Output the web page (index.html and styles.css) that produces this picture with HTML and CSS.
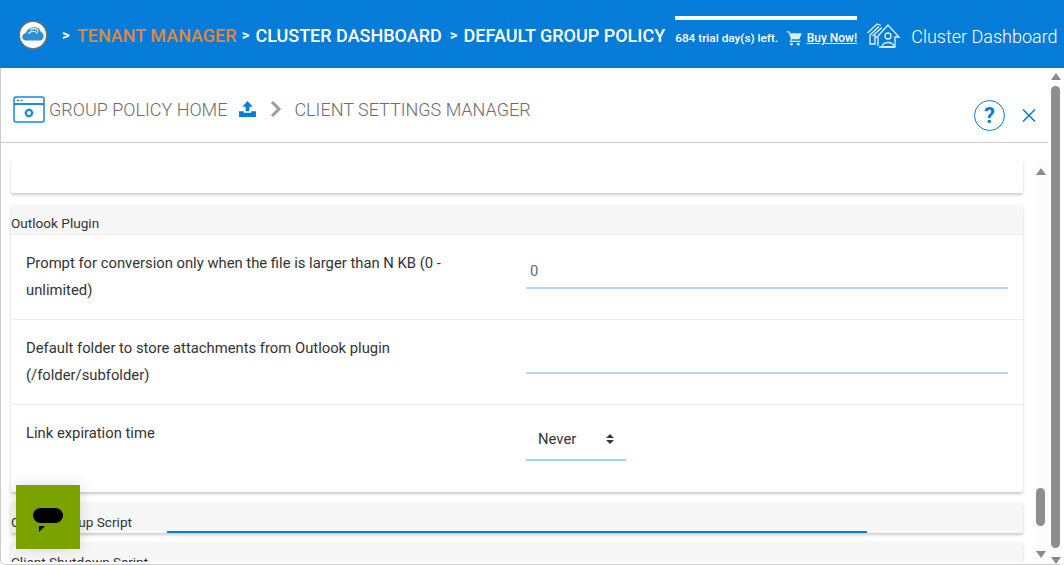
FILE: index.html
```html
<!DOCTYPE html>
<html lang="en">
<head>
    <meta charset="UTF-8">
    <title>Client Settings Manager</title>
    <link rel="stylesheet" href="styles.css">
</head>
<body>
    <header class="topbar">
        <span class="logo">
            <svg width="30" height="30" viewBox="0 0 30 30">
                <circle cx="15" cy="15" r="13.600" fill="#fff" stroke="#7d7468" stroke-width="1.300"/>
                <path d="M8 20.500c-5 0-5-7 0-7.500C9 7.500 20 4 23 12c4 1 3.500 8.500-1 8.500z" fill="#2b8fd6"/>
                <path d="M10.500 13.500c3-3 7-3 9 0M12.500 10c2.500-2 6-2 8 1.500" fill="none" stroke="#fff" stroke-width="1.200"/>
            </svg>
        </span>
        <nav class="crumbs">
            <span class="sep first">&gt;</span>
            <a class="tenant">TENANT MANAGER</a>
            <span class="sep">&gt;</span>
            <a class="cluster">CLUSTER DASHBOARD</a>
            <span class="sep gap">&gt;</span>
            <a class="policy">DEFAULT GROUP POLICY</a>
        </nav>
        <div class="trial">
            <span class="trial-text">684 trial day(s) left.</span>
            <svg class="cart" width="17" height="16" viewBox="0 0 24 22">
                <path d="M1 1h4l1 3h17l-3.500 9H8.500L7.500 15H21v2H5l2-4.500L4 3H1z" fill="#d9ecfb"/>
                <circle cx="8" cy="20" r="2" fill="#d9ecfb"/>
                <circle cx="18" cy="20" r="2" fill="#d9ecfb"/>
            </svg>
            <a class="buy">Buy Now!</a>
        </div>
        <svg class="house" width="33" height="25" viewBox="0 0 33 25" fill="none" stroke="#e3f1fc" stroke-width="1.300">
            <path d="M0.500 10 10 1l4 1.500M3 12 12 3.500M5.500 13 15 4.500"/>
            <path d="M11 13 21 2l11 12h-4v10H12"/>
            <path d="M3 12v9h5V12M8 14h3v9"/>
            <circle cx="21" cy="13" r="3"/>
            <path d="M15 24c0-6 12-6 12 0z"/>
        </svg>
        <span class="page-name">Cluster Dashboard</span>
    </header>

    <main class="modal">
        <div class="modal-body">
            <div class="modal-head">
                <svg class="win-icon" width="32" height="27" viewBox="0 0 32 27" fill="none" stroke="#1587df" stroke-width="1.500">
                    <path d="M1 8V3a2 2 0 0 1 2-2h26a2 2 0 0 1 2 2v5z"/>
                    <rect x="1" y="8" width="30" height="18" rx="2"/>
                    <path d="M4 4.500h2M7.500 4.500h2" stroke-width="1.500"/>
                    <circle cx="16" cy="17" r="3" stroke-width="2"/>
                    <path d="M16 12.500V14M16 20v1.500M11.500 17H13M19 17h1.500M13 14l1 1M18 19l1 1M19 14l-1 1M14 19l-1 1" stroke-width="1.400"/>
                </svg>
                <span class="head-link">GROUP POLICY HOME</span>
                <svg class="upload" width="17" height="16" viewBox="0 0 18 17">
                    <path d="M9 0 14.500 6H11v5H7V6H3.500z" fill="#067cd9"/>
                    <path d="M0 11h5v1.500h8V11h5v6H0z" fill="#067cd9"/>
                </svg>
                <svg class="chevron" width="12" height="16" viewBox="0 0 12 16">
                    <path d="M2 1l7 7-7 7" fill="none" stroke="#a39c96" stroke-width="3"/>
                </svg>
                <span class="head-link">CLIENT SETTINGS MANAGER</span>
                <span class="head-tools">
                    <span class="help">?</span>
                    <svg width="14" height="13" viewBox="0 0 14 13">
                        <path d="M1 .5l12 12M13 .5l-12 12" stroke="#067cd9" stroke-width="1.500"/>
                    </svg>
                </span>
            </div>
            <div class="settings">
                <div class="settings-scroll">
                    <section class="card blank"></section>

                    <section class="card">
                        <h3 class="card-title">Outlook Plugin</h3>
                        <div class="row">
                            <label class="row-label">Prompt for conversion only when the file is larger than N KB (0 - unlimited)</label>
                            <div class="field field-value">0</div>
                        </div>
                        <div class="row">
                            <label class="row-label">Default folder to store attachments from Outlook plugin (/folder/subfolder)</label>
                            <div class="field"></div>
                        </div>
                        <div class="row last">
                            <label class="row-label">Link expiration time</label>
                            <div class="select">Never
                                <svg width="8" height="10" viewBox="0 0 8 10">
                                    <path d="M4 0 8 4H0zM4 10 0 6h8z" fill="#343a40"/>
                                </svg>
                            </div>
                        </div>
                    </section>

                    <section class="card collapsed">
                        <h3 class="card-title">Client Startup Script</h3>
                    </section>
                    <section class="card collapsed">
                        <h3 class="card-title">Client Shutdown Script</h3>
                    </section>
                </div>
                <div class="scrollbar inner">
                    <i class="up"></i>
                    <b class="thumb"></b>
                    <i class="down"></i>
                </div>
            </div>
        </div>
        <div class="scrollbar outer">
            <i class="up"></i>
            <b class="thumb"></b>
            <i class="down"></i>
        </div>
    </main>

    <div class="progress-line"></div>
    <button class="chat">
        <svg width="32" height="24" viewBox="0 0 32 24">
            <rect x="1" y="0" width="30" height="15" rx="7.500" fill="#000"/>
            <path d="M7 18h6l-6 6z" fill="#000"/>
        </svg>
    </button>
</body>
</html>
```

FILE: styles.css
```css
html, body {
    margin: 0;
    height: 100%;
    overflow: hidden;
}
body {
    display: flex;
    flex-direction: column;
    font-family: Roboto, "Liberation Sans", sans-serif;
    background: #fff;
}
a {
    color: inherit;
}

/* top bar */
.topbar {
    flex: 0 0 68px;
    display: flex;
    align-items: center;
    box-sizing: border-box;
    padding-top: 2px;
    background: #067cd9;
    color: #fff;
    white-space: nowrap;
}
.logo {
    display: flex;
    margin-left: 18px;
}
.crumbs {
    display: flex;
    align-items: center;
    margin-left: 14px;
    font-size: 18px;
    font-weight: 500;
}
.sep {
    font-weight: 700;
    font-size: 15px;
    margin: 0 5px;
}
.sep.first {
    margin: 0 7px 0 0;
}
.sep.gap {
    margin: 0 5px 0 8px;
}
.tenant {
    color: #e1863b;
}
.cluster {
    margin-left: 1px;
}
.policy {
    margin-left: 1px;
}
.trial {
    align-self: flex-start;
    display: flex;
    align-items: center;
    width: 182px;
    height: 37px;
    margin: 14px 0 0 10px;
    padding-top: 3px;
    border-top: 4px solid #fff;
    box-sizing: border-box;
    font-size: 11.800px;
    font-weight: 500;
}
.cart {
    margin: 0 4px 0 8px;
}
.buy {
    font-size: 12px;
    text-decoration: underline;
}
.house {
    margin-left: 10px;
}
.page-name {
    margin-left: 11px;
    padding-top: 2px;
    font-size: 18px;
    font-weight: 300;
}

/* modal */
.modal {
    flex: 1;
    min-height: 0;
    display: flex;
    border-left: 1px solid #ccc;
    border-bottom: 1px solid #ccc;
    border-radius: 0 0 5px 5px;
    overflow: hidden;
}
.modal-body {
    flex: 1;
    min-width: 0;
    display: flex;
    flex-direction: column;
}
.modal-head {
    flex: 0 0 75px;
    display: flex;
    align-items: center;
    padding: 8px 12px 0 12px;
    box-sizing: border-box;
    border-bottom: 1px solid #ccc;
    color: #6c6c6c;
}
.head-link {
    font-size: 18px;
    font-weight: 300;
}
.win-icon {
    margin-right: 4px;
}
.upload {
    margin: 0 14px 0 12px;
}
.chevron {
    margin-right: 12px;
}
.head-tools {
    margin-left: auto;
    display: flex;
    align-items: center;
    gap: 17px;
    margin-top: 13px;
}
.help {
    width: 31px;
    height: 31px;
    border: 1.500px solid #067cd9;
    border-radius: 50%;
    box-sizing: border-box;
    display: flex;
    align-items: center;
    justify-content: center;
    color: #067cd9;
    font-size: 22px;
    font-weight: 700;
}

/* settings list */
.settings {
    flex: 1;
    min-height: 0;
    display: flex;
    margin: 17px 0 2px;
}
.settings-scroll {
    flex: 1;
    min-width: 0;
    overflow: hidden;
    padding: 0 11px 0 10px;
}
.card {
    margin-bottom: 12px;
    background: #fff;
    border-radius: 2px;
    box-shadow: 0 2px 3px rgba(0, 0, 0, .2);
}
.card.blank {
    height: 33px;
}
.card.collapsed {
    background: #f7f7f7;
    height: 31px;
    margin-top: -2px;
    margin-bottom: 11px;
}
.card-title {
    margin: 0;
    height: 30px;
    padding-top: 11px;
    box-sizing: border-box;
    background: #f7f7f7;
    font-size: 13.600px;
    font-weight: 400;
    line-height: 15px;
    color: #333;
    border-bottom: 1px solid #eee;
}
.card.collapsed .card-title {
    border-bottom: 0;
    padding-top: 13px;
}
.row {
    display: flex;
    height: 85px;
    box-sizing: border-box;
    padding: 15px 15px 0;
    border-bottom: 1px solid #eee;
}
.row.last {
    height: 87px;
    border-bottom: 0;
}
.row-label {
    width: 500px;
    padding-right: 60px;
    box-sizing: border-box;
    font-size: 14.800px;
    line-height: 27px;
    color: #333;
}
.field {
    flex: 1;
    height: 39px;
    box-sizing: border-box;
    border-bottom: 2px solid #b5d8f4;
    padding: 10px 0 0 4px;
    font-size: 14.800px;
    line-height: 22px;
    color: #6f5f8a;
}
.select {
    display: flex;
    align-items: center;
    justify-content: space-between;
    width: 100px;
    height: 41px;
    padding: 0 12px 2px 12px;
    box-sizing: border-box;
    border-bottom: 2px solid #a7d2f2;
    font-size: 14.800px;
    color: #333;
}

/* scrollbars */
.scrollbar {
    flex: 0 0 auto;
    display: flex;
    flex-direction: column;
    align-items: center;
    box-sizing: border-box;
    background: #fcfcfc;
}
.scrollbar i {
    width: 0;
    height: 0;
    border-left: 5px solid transparent;
    border-right: 5px solid transparent;
}
.scrollbar i.up {
    border-bottom: 7px solid #8a8a8a;
}
.scrollbar i.down {
    border-top: 7px solid #8a8a8a;
}
.scrollbar .thumb {
    width: 9px;
    background: #8e8e8e;
    border-radius: 5px;
}
.scrollbar.inner {
    width: 14px;
    padding: 8px 1px 0 0;
}
.inner .thumb {
    height: 38px;
    margin: 313px 0 25px;
}
.scrollbar.outer {
    width: 16px;
    padding: 5px 1px 0 0;
    background: #fff;
}
.outer .thumb {
    height: 462px;
    margin: 6px 0 9px;
}

/* overlays */
.progress-line {
    position: absolute;
    left: 167px;
    top: 531px;
    width: 700px;
    height: 2px;
    background: #067cd9;
}
.chat {
    position: absolute;
    left: 16px;
    top: 485px;
    width: 64px;
    height: 64px;
    padding: 6px 0 0;
    border: 0;
    display: flex;
    align-items: center;
    justify-content: center;
    background: #7aa300;
    box-shadow: 0 0 14px rgba(0, 0, 0, .14);
}
```
